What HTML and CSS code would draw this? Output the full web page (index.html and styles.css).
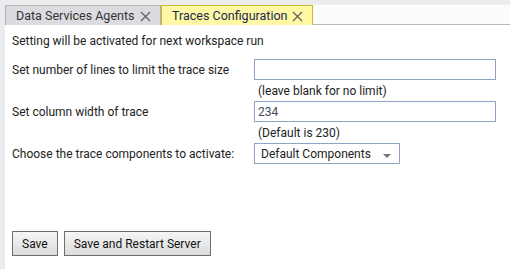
FILE: index.html
```html
<!DOCTYPE html>
<html lang="en">
<head>
  <meta charset="UTF-8" />
  <title>Traces Configuration</title>
  <link rel="stylesheet" href="styles.css">
</head>
<body>
<div class="shell">
  <div class="tabbar">
    <div class="tab">
      <span>Data Services Agents</span>
      <svg class="close" width="11" height="11" viewBox="0 0 11 11"><path d="M1 1L10 10M10 1L1 10" stroke="#666" stroke-width="1.4"/></svg>
    </div>
    <div class="tab active">
      <span>Traces Configuration</span>
      <svg class="close" width="11" height="11" viewBox="0 0 11 11"><path d="M1 1L10 10M10 1L1 10" stroke="#666" stroke-width="1.4"/></svg>
    </div>
  </div>
  <main class="content">
    <p class="intro">Setting will be activated for next workspace run</p>
    <div class="row">
      <label>Set number of lines to limit the trace size</label>
      <div class="field">
        <input type="text" value="">
        <div class="hint">(leave blank for no limit)</div>
      </div>
    </div>
    <div class="row">
      <label>Set column width of trace</label>
      <div class="field">
        <input type="text" value="234">
        <div class="hint">(Default is 230)</div>
      </div>
    </div>
    <div class="row">
      <label>Choose the trace components to activate:</label>
      <div class="field">
        <div class="select">
          <span>Default Components</span>
          <svg width="8" height="5" viewBox="0 0 8 5"><path d="M0 0H8L4 4Z" fill="#777"/></svg>
        </div>
      </div>
    </div>
    <div class="actions">
      <button>Save</button>
      <button>Save and Restart Server</button>
    </div>
  </main>
</div>
</body>
</html>
```

FILE: styles.css
```css
body {
  margin: 0;
  font-family: Roboto, "Liberation Sans", sans-serif;
  font-size: 12px;
  color: #222;
  background: #e8ecf0;
}
.shell {
  margin-left: 5px;
  height: 269px;
  background: #fff;
  display: flex;
  flex-direction: column;
}
.tabbar {
  display: flex;
  align-items: flex-end;
  height: 25px;
  flex-shrink: 0;
  box-sizing: border-box;
  background: linear-gradient(#ececec 0 4px, #f4eef4 4px 5px, #fbfcfb 5px);
  border-bottom: 1px solid #b8b8b8;
}
.tab {
  display: flex;
  align-items: center;
  justify-content: space-between;
  flex-shrink: 0;
  white-space: nowrap;
  box-sizing: border-box;
  padding: 0 9px 0 10px;
  margin-bottom: -1px;
  height: 20px;
  background: #dcdce0;
  border: 1px solid #b0b0b4;
  border-bottom: none;
  color: #333;
  font-size: 12.5px;
}
.tab:first-child { width: 156px; }
.tab.active {
  width: 152px;
  background: #fff8a4;
  border-color: #c9b830;
  color: #1a2850;
}
.close { margin-top: 1px; }
.content {
  flex: 1;
  display: flex;
  flex-direction: column;
  padding: 9px 14px 13px 7px;
}
.intro { margin: 0 0 11px; }
.row {
  display: flex;
  align-items: flex-start;
  margin-bottom: 5px;
}
.row label {
  width: 242px;
  padding-top: 4px;
}
.field { display: flex; flex-direction: column; }
input {
  width: 242px;
  height: 21px;
  box-sizing: border-box;
  border: 1px solid #8fa4c4;
  padding: 0 3px;
  font: inherit;
  color: #3c4c60;
  outline: none;
}
.hint { padding: 4px 0 0 4px; height: 16px; box-sizing: border-box; }
.select {
  width: 146px;
  height: 21px;
  box-sizing: border-box;
  border: 1px solid #8fa4c4;
  display: flex;
  align-items: center;
  justify-content: space-between;
  padding: 0 8px 0 6px;
}
.select svg { margin-top: 5px; }
.actions {
  margin-top: auto;
  display: flex;
  gap: 6px;
}
button {
  height: 25px;
  padding: 0 9px;
  font: inherit;
  color: #111;
  background: linear-gradient(#f6f6f6, #dcdcdc);
  border: 1px solid #6e6e6e;
  border-radius: 0;
}
```
